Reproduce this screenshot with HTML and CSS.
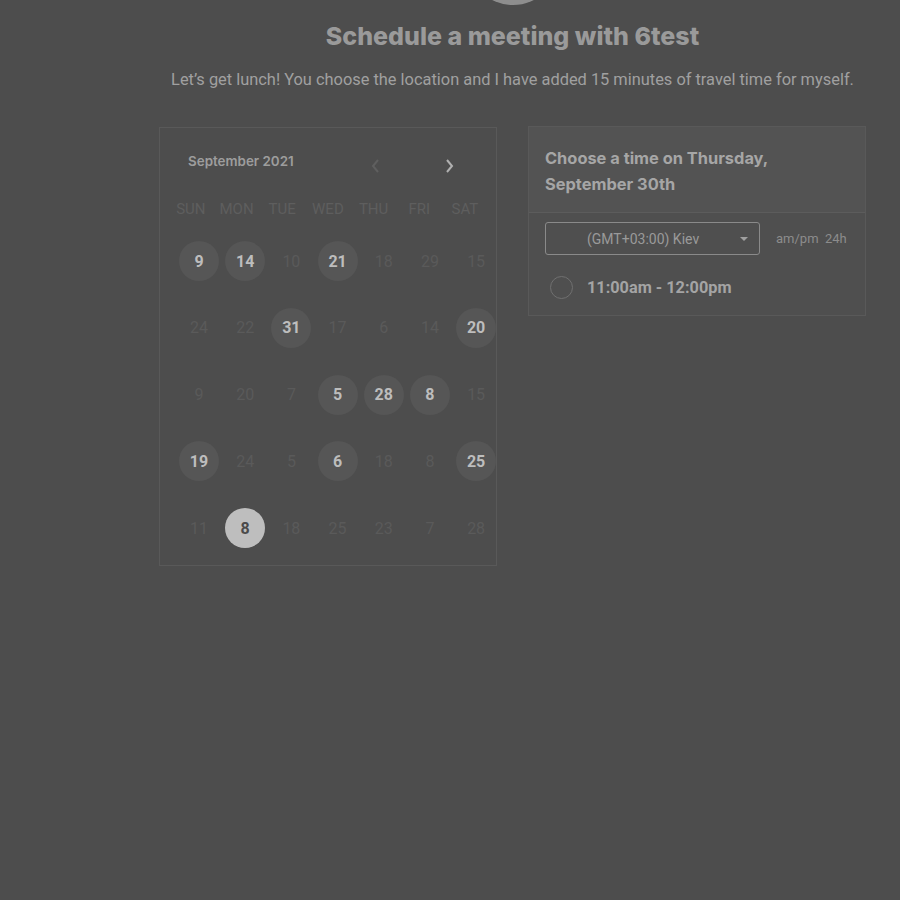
FILE: index.html
```html
<!DOCTYPE html>
<html lang="en">
<head>
    <meta charset="UTF-8">
    <meta name="viewport" content="width=device-width, initial-scale=1.0">
    <title>Schedule a meeting</title>
    <link rel="stylesheet" href="styles.css">
</head>
<body>
    <div class="page">
        <div class="avatar"></div>
        <h1 class="title">Schedule a meeting with 6test</h1>
        <p class="subtitle">Let’s get lunch! You choose the location and I have added 15 minutes of travel time for myself.</p>

        <div class="columns">
            <div class="calendar">
                <div class="cal-head">
                    <span class="month">September 2021</span>
                    <span class="arrow prev">
                        <svg width="10" height="16" viewBox="0 0 10 16"><path d="M8 2 L3 8 L8 14" fill="none" stroke="currentColor" stroke-width="2"/></svg>
                    </span>
                    <span class="arrow next">
                        <svg width="10" height="16" viewBox="0 0 10 16"><path d="M2 2 L7 8 L2 14" fill="none" stroke="currentColor" stroke-width="2"/></svg>
                    </span>
                </div>
                <div class="weekdays">
                    <span>SUN</span><span>MON</span><span>TUE</span><span>WED</span><span>THU</span><span>FRI</span><span>SAT</span>
                </div>
                <div class="days">
                    <span class="day on">9</span><span class="day on">14</span><span class="day">10</span><span class="day on">21</span><span class="day">18</span><span class="day">29</span><span class="day">15</span>
                    <span class="day">24</span><span class="day">22</span><span class="day on">31</span><span class="day">17</span><span class="day">6</span><span class="day">14</span><span class="day on">20</span>
                    <span class="day">9</span><span class="day">20</span><span class="day">7</span><span class="day on">5</span><span class="day on">28</span><span class="day on">8</span><span class="day">15</span>
                    <span class="day on">19</span><span class="day">24</span><span class="day">5</span><span class="day on">6</span><span class="day">18</span><span class="day">8</span><span class="day on">25</span>
                    <span class="day">11</span><span class="day selected">8</span><span class="day">18</span><span class="day">25</span><span class="day">23</span><span class="day">7</span><span class="day">28</span>
                </div>
            </div>

            <div class="times">
                <div class="times-head">Choose a time on Thursday, September 30th</div>
                <div class="times-body">
                    <div class="tz-row">
                        <div class="tz-select">
                            <span>(GMT+03:00) Kiev</span>
                            <span class="caret"></span>
                        </div>
                        <div class="format">am/pm&nbsp;&nbsp;24h</div>
                    </div>
                    <div class="slot">
                        <span class="radio"></span>
                        <span class="slot-label">11:00am - 12:00pm</span>
                    </div>
                </div>
            </div>
        </div>
    </div>
</body>
</html>
```

FILE: styles.css
```css
body {
    margin: 0;
    background-color: #4d4d4d;
    font-family: Roboto, "Liberation Sans", sans-serif;
    color: #9c9c9c;
    height: 900px;
    overflow: hidden;
}

.page {
    width: 707px;
    margin-left: 159px;
    display: flex;
    flex-direction: column;
    align-items: center;
}

.avatar {
    width: 92px;
    height: 92px;
    border-radius: 50%;
    background-color: #8e8e8e;
    margin-top: -87px;
}

.title {
    font-family: Inter, "Liberation Sans", sans-serif;
    font-weight: 800;
    font-size: 25px;
    line-height: 30px;
    color: #9a9a9a;
    margin: 16px 0 0;
}

.subtitle {
    font-size: 16.4px;
    line-height: 20px;
    color: #a0a0a0;
    margin: 19px 0 0;
    white-space: nowrap;
}

.columns {
    align-self: stretch;
    display: flex;
    gap: 31px;
    margin-top: 36px;
    align-items: flex-start;
}

.calendar {
    width: 338px;
    height: 439px;
    box-sizing: border-box;
    border: 1px solid #595959;
    padding: 19px 0 0 0;
    margin-top: 1px;
}

.cal-head {
    display: flex;
    align-items: center;
    height: 30px;
    font-family: Inter, "Liberation Sans", sans-serif;
}

.month {
    font-size: 13.4px;
    font-weight: 600;
    color: #9d9d9d;
    margin-left: 28px;
    width: 180px;
    margin-top: -2px;
}

.arrow {
    display: flex;
    margin-top: 8px;
}

.prev {
    color: #5f5f5f;
    margin-left: 2px;
}

.next {
    color: #b0b0b0;
    margin-left: 65px;
}

.weekdays {
    display: grid;
    grid-template-columns: repeat(7, 45.7px);
    padding-left: 8px;
    margin-top: 22px;
    font-size: 15px;
    line-height: 20px;
    color: #5e5e5e;
    text-align: center;
}

.days {
    display: grid;
    grid-template-columns: repeat(7, 46.2px);
    grid-auto-rows: 66.8px;
    padding-left: 16px;
    margin-top: 8px;
}

.day {
    width: 40px;
    height: 40px;
    margin: 14px 3px 0;
    border-radius: 50%;
    display: flex;
    align-items: center;
    justify-content: center;
    font-size: 16px;
    color: #5a5a5a;
}

.day.on {
    background-color: #565656;
    color: #bdbdbd;
    font-weight: 700;
}

.day.selected {
    background-color: #bebebe;
    color: #4a4a4a;
    font-weight: 700;
}

.times {
    width: 338px;
    box-sizing: border-box;
    border: 1px solid #595959;
}

.times-head {
    background-color: #535353;
    border-bottom: 1px solid #5c5c5c;
    padding: 18px 70px 15px 16px;
    font-family: Inter, "Liberation Sans", sans-serif;
    font-weight: 700;
    font-size: 16.4px;
    line-height: 26px;
    color: #a6a6a6;
}

.times-body {
    padding: 9px 16px 16px 16px;
    background-color: #4f4f4f;
}

.tz-row {
    display: flex;
    align-items: center;
}

.tz-select {
    width: 215px;
    height: 33px;
    box-sizing: border-box;
    border: 1px solid #8a8a8a;
    border-radius: 3px;
    display: flex;
    align-items: center;
    font-size: 14px;
    color: #9a9a9a;
    position: relative;
}

.tz-select span:first-child {
    margin-left: 41px;
}

.caret {
    position: absolute;
    right: 11px;
    top: 14px;
    border-left: 4px solid transparent;
    border-right: 4px solid transparent;
    border-top: 4px solid #a0a0a0;
}

.format {
    margin-left: 16px;
    font-size: 13px;
    color: #8c8c8c;
}

.slot {
    display: flex;
    align-items: center;
    margin-top: 21px;
}

.radio {
    width: 21px;
    height: 21px;
    border: 1.5px solid #707070;
    border-radius: 50%;
    margin-left: 5px;
}

.slot-label {
    margin-left: 14px;
    font-size: 16.3px;
    font-weight: 700;
    color: #a4a4a4;
}
```
